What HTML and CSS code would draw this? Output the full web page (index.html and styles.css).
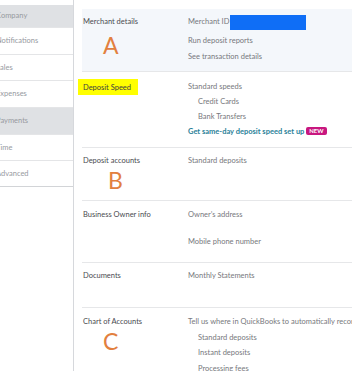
FILE: index.html
```html
<!DOCTYPE html>
<html lang="en">
<head>
    <meta charset="UTF-8">
    <meta name="viewport" content="width=device-width, initial-scale=1.0">
    <title>Account and Settings - Payments</title>
    <link rel="stylesheet" href="styles.css">
</head>
<body>
    <div class="page">
        <nav class="sidebar">
            <div class="nav-item group first">Company</div>
            <div class="nav-item">Notifications</div>
            <div class="nav-item">Sales</div>
            <div class="nav-item">Expenses</div>
            <div class="nav-item group">Payments</div>
            <div class="nav-item">Time</div>
            <div class="nav-item">Advanced</div>
        </nav>

        <main class="content">
            <section class="row merchant">
                <div class="label">
                    Merchant details
                    <span class="mark mark-a">A</span>
                </div>
                <div class="values">
                    <div class="line">Merchant ID<span class="redacted"></span></div>
                    <div class="line">Run deposit reports</div>
                    <div class="line">See transaction details</div>
                </div>
            </section>

            <section class="row speed">
                <div class="label"><span class="highlight">Deposit Speed</span></div>
                <div class="values">
                    <div class="line">Standard speeds</div>
                    <div class="line sub">Credit Cards</div>
                    <div class="line sub">Bank Transfers</div>
                    <div class="line link">Get same-day deposit speed set up <span class="badge">NEW</span></div>
                </div>
            </section>

            <section class="row accounts">
                <div class="label">
                    Deposit accounts
                    <span class="mark mark-b">B</span>
                </div>
                <div class="values">
                    <div class="line">Standard deposits</div>
                </div>
            </section>

            <section class="row owner">
                <div class="label">Business Owner info</div>
                <div class="values">
                    <div class="line">Owner’s address</div>
                    <div class="line spaced">Mobile phone number</div>
                </div>
            </section>

            <section class="row documents">
                <div class="label">Documents</div>
                <div class="values">
                    <div class="line">Monthly Statements</div>
                </div>
            </section>

            <section class="row chart">
                <div class="label">
                    Chart of Accounts
                    <span class="mark mark-c">C</span>
                </div>
                <div class="values">
                    <div class="line">Tell us where in QuickBooks to automatically record your payments</div>
                    <div class="line sub">Standard deposits</div>
                    <div class="line sub">Instant deposits</div>
                    <div class="line sub">Processing fees</div>
                </div>
            </section>
        </main>
    </div>
</body>
</html>
```

FILE: styles.css
```css
html, body {
    margin: 0;
    height: 100%;
    overflow: hidden;
}

body {
    font-family: Lato, "Open Sans", sans-serif;
    font-size: 7.5px;
    background-color: #fff;
    color: #4a4b50;
}

.page {
    display: flex;
    min-height: 100vh;
}

/* Left settings menu */
.sidebar {
    width: 73px;
    flex-shrink: 0;
    padding-top: 5px;
    border-right: 1px solid #d6d8dc;
}

.nav-item {
    box-sizing: border-box;
    height: 26.7px;
    line-height: 26px;
    text-indent: -4px;
    color: #979a9f;
    border-top: 1px solid #e4e5e7;
    white-space: nowrap;
    overflow: hidden;
}

.nav-item.first {
    height: 22px;
    line-height: 21px;
    border-top: none;
}

.nav-item:last-child {
    border-bottom: 1px solid #d2d4d7;
}

.nav-item.group {
    background-color: #dfe1e4;
}

/* Settings rows */
.content {
    flex: 1;
    min-width: 0;
    padding: 9px 0 0 8px;
}

.row {
    box-sizing: border-box;
    display: grid;
    grid-template-columns: 106px 1fr;
    border-bottom: 1px solid #e6e7e9;
    white-space: nowrap;
}

.label {
    padding-left: 1px;
    line-height: 15px;
}

.values {
    color: #77787d;
}

.line {
    line-height: 15px;
}

.line.sub {
    padding-left: 10px;
}

.line.spaced {
    margin-top: 12px;
}

.merchant {
    min-height: 62px;
    padding: 5px 0 6px;
    background-color: #f4f7fb;
}

.merchant .line,
.merchant .label {
    line-height: 16px;
}

.merchant .line + .line {
    margin-top: 3px;
}

.merchant .line + .line + .line {
    margin-top: 0;
}

.redacted {
    display: inline-block;
    width: 76px;
    height: 15px;
    margin-left: 1px;
    vertical-align: middle;
    background-color: #0f6ef6;
}

.speed {
    min-height: 76px;
    padding-top: 7px;
}

.highlight {
    display: inline-block;
    margin-left: -5px;
    padding: 1px 7px 0 5px;
    line-height: 15px;
    color: #3d3e42;
    background-color: #ffff00;
}

.link {
    color: #2a8199;
    font-weight: 700;
}

.badge {
    display: inline-block;
    padding: 0 3px;
    line-height: 8px;
    font-size: 6px;
    font-weight: 700;
    color: #fff;
    background-color: #c8177f;
    border-radius: 2px;
    vertical-align: 1px;
}

.accounts {
    min-height: 53px;
    padding-top: 5px;
}

.owner {
    min-height: 62px;
    padding-top: 6px;
}

.documents {
    min-height: 45px;
    padding-top: 5px;
}

.chart {
    padding-top: 6px;
}

.chart .line {
    line-height: 15.5px;
}

/* Orange annotation letters */
.mark {
    display: block;
    font-size: 23px;
    line-height: 22px;
    color: #e2803f;
}

.mark-a {
    margin: 4px 0 0 20px;
}

.mark-b {
    margin: 1px 0 0 25px;
}

.mark-c {
    margin: 1px 0 0 20px;
}
```
